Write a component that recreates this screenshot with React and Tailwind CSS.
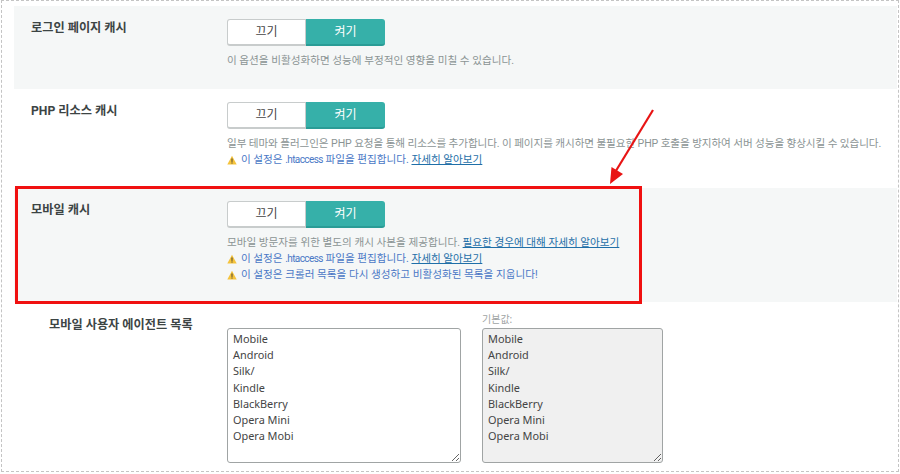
import React from "react";

const agents = "Mobile\nAndroid\nSilk/\nKindle\nBlackBerry\nOpera Mini\nOpera Mobi";
const font = "font-['Roboto','Noto_Sans_CJK_KR',sans-serif]";

function Toggle() {
  return (
    <div className="flex h-[27px] w-[158px] text-[12px]">
      <div className="flex w-[79px] items-center justify-center rounded-l-[3px] border border-b-2 border-[#c8cccc] bg-white pb-[1px] text-[#444]">끄기</div>
      <div className="flex w-[79px] items-center justify-center rounded-r-[3px] border-b-2 border-[#2a9c96] bg-[#36b0a9] text-white">켜기</div>
    </div>
  );
}

function Warning({ children }) {
  return (
    <p className="flex h-[16px] items-center text-[10.6px] leading-[16px] text-[#4a78c6]">
      <svg viewBox="0 0 16 16" className="mr-[4px] h-[10px] w-[10px] shrink-0">
        <path d="M8 1 15.5 15H.5z" fill="#f5c33b" />
        <path d="M7.2 5.5h1.6l-.2 5.5H7.4zM7.2 12h1.6v1.6H7.2z" fill="#333" />
      </svg>
      <span className="whitespace-nowrap">{children}</span>
    </p>
  );
}

function HtaccessWarning() {
  return (
    <Warning>
      이 설정은 <span className="text-[10px] tracking-[-0.6px]">.htaccess</span> 파일을 편집합니다. <DocLink>자세히 알아보기</DocLink>
    </Warning>
  );
}

function DocLink({ children }) {
  return <a className="text-[#1f6fa8] underline">{children}</a>;
}

function Row({ title, gray, height, children }) {
  return (
    <div className={`flex pl-[17px] ${gray ? "bg-[#f5f7f7]" : "bg-white"} ${height}`}>
      <h3 className="w-[196px] shrink-0 pt-[12px] text-[12.2px] leading-[20px] font-bold text-[#3c4444]">{title}</h3>
      <div className="pt-[13px]">
        <Toggle />
        <div className="mt-[6px]">{children}</div>
      </div>
    </div>
  );
}

function Help({ children, tight }) {
  return <p className={`h-[17px] text-[10.6px] leading-[17px] whitespace-nowrap text-[#8b9494] ${tight ? "tracking-[-0.1px]" : ""}`}>{children}</p>;
}

export default function App() {
  return (
    <div className={`relative h-[474px] w-[900px] overflow-hidden bg-white ${font}`}>
      <div className="absolute top-0 left-[1px] h-[472px] w-[898px] border border-dashed border-[#c4c4c4]"></div>
      <div className="ml-[14px] w-[883px] pt-[6px]">
        <Row title="로그인 페이지 캐시" gray height="h-[83px]">
          <Help>이 옵션을 비활성화하면 성능에 부정적인 영향을 미칠 수 있습니다.</Help>
        </Row>
        <Row title="PHP 리소스 캐시" height="h-[99px]">
          <Help tight>일부 테마와 플러그인은 PHP 요청을 통해 리소스를 추가합니다. 이 페이지를 캐시하면 불필요한 PHP 호출을 방지하여 서버 성능을 향상시킬 수 있습니다.</Help>
          <HtaccessWarning />
        </Row>
        <Row title="모바일 캐시" gray height="h-[114px]">
          <Help>모바일 방문자를 위한 별도의 캐시 사본을 제공합니다. <DocLink>필요한 경우에 대해 자세히 알아보기</DocLink></Help>
          <HtaccessWarning />
          <Warning>이 설정은 크롤러 목록을 다시 생성하고 비활성화된 목록을 지웁니다!</Warning>
        </Row>
        <div className="flex">
          <h4 className="ml-[35px] w-[178px] shrink-0 pt-[13px] text-[12.2px] leading-[20px] font-bold text-[#3c4444]">모바일 사용자 에이전트 목록</h4>
          <div className="flex gap-[21px] pt-[10px] font-['Noto_Sans','Noto_Sans_CJK_KR',sans-serif]">
            <div className="pt-[16px]">
              <textarea readOnly defaultValue={agents} className="block h-[135px] w-[234px] rounded-[3px] border border-[#a0a4a4] bg-white px-[5px] py-[2px] text-[10.9px] leading-[16.2px] text-[#444]"></textarea>
            </div>
            <div>
              <p className="h-[16px] text-[10px] leading-[14px] text-[#a0a4a4]">기본값:</p>
              <textarea readOnly defaultValue={agents} className="block h-[135px] w-[181px] rounded-[3px] border border-[#a0a4a4] bg-[#f0f0f0] px-[5px] py-[2px] text-[10.9px] leading-[16.2px] text-[#444]"></textarea>
            </div>
          </div>
        </div>
      </div>
      {/* annotation over the page */}
      <div className="absolute top-[186px] left-[15px] h-[118px] w-[627px] border-[3px] border-[#f01010]"></div>
      <svg className="absolute top-[105px] left-[600px] h-[85px] w-[60px]" viewBox="0 0 60 85">
        <path d="M53 5 14 69" stroke="#e81414" strokeWidth="2.2" fill="none" />
        <path d="M10 79 11.5 62 23 69z" fill="#e81414" />
      </svg>
    </div>
  );
}
